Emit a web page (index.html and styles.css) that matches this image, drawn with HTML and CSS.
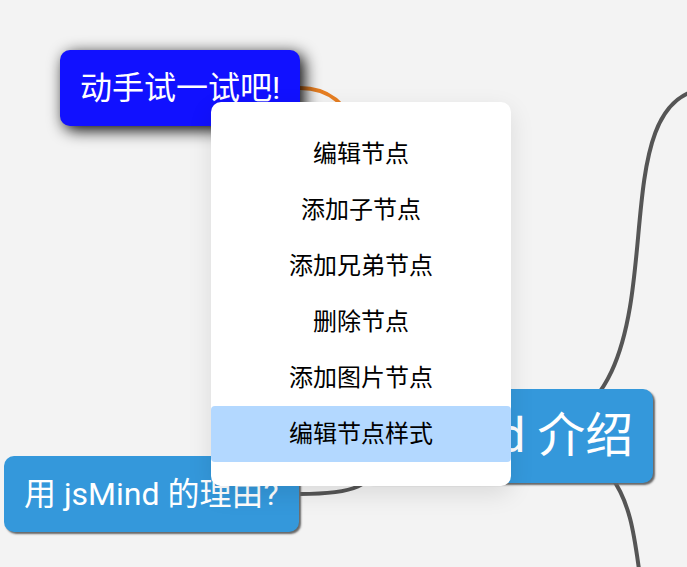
FILE: index.html
```html
<!DOCTYPE html>
<html lang="zh-CN">
<head>
<meta charset="utf-8">
<title>jsMind 介绍</title>
<link rel="stylesheet" href="styles.css">
</head>
<body>
<main class="mindmap">
  <svg class="lines" aria-hidden="true">
    <path class="line line-orange" d="M300 88C437 88 300 436 505 436"/>
    <path class="line" d="M300 494C437 494 300 436 505 436"/>
    <path class="line" d="M714 88C575 88 714 436 505 436"/>
    <path class="line" d="M714 658C575 658 714 436 505 436"/>
  </svg>
  <div class="node node-root">jsMind 介绍</div>
  <div class="node node-selected">动手试一试吧!</div>
  <div class="node node-reason">用 jsMind 的理由?</div>
  <div class="menu" role="menu">
    <button class="menu-item" type="button" role="menuitem">编辑节点</button>
    <button class="menu-item" type="button" role="menuitem">添加子节点</button>
    <button class="menu-item" type="button" role="menuitem">添加兄弟节点</button>
    <button class="menu-item" type="button" role="menuitem">删除节点</button>
    <button class="menu-item" type="button" role="menuitem">添加图片节点</button>
    <button class="menu-item menu-item-active" type="button" role="menuitem">编辑节点样式</button>
  </div>
</main>
</body>
</html>
```
FILE: styles.css
```css
* {
  box-sizing: border-box;
}

body {
  margin: 0;
  background: #f3f3f3;
  font-family: Roboto, "Noto Sans CJK SC", sans-serif;
}

.mindmap {
  position: relative;
  min-height: 100vh;
  overflow: hidden;
}

.lines {
  position: absolute;
  inset: 0;
  width: 100%;
  height: 100%;
}

.line {
  fill: none;
  stroke: #555;
  stroke-width: 4;
}

.line-orange {
  stroke: #e67e22;
}

.node {
  position: absolute;
  padding: 20px;
  border-radius: 10px;
  background: #3498db;
  box-shadow: 2px 2px 2px #666;
  color: #fff;
  font-size: 32px;
  line-height: 36px;
  white-space: nowrap;
}

.node-root {
  top: 389px;
  left: 362px;
  font-size: 48px;
  line-height: 54px;
}

.node-selected {
  top: 50px;
  left: 60px;
  background: #11f;
  box-shadow: 4px 4px 16px #000;
}

.node-reason {
  top: 456px;
  left: 4px;
}

.menu {
  position: absolute;
  top: 102px;
  left: 211px;
  display: flex;
  flex-direction: column;
  width: 300px;
  padding: 24px 0;
  border-radius: 10px;
  background: #fff;
  box-shadow: 0 8px 24px rgba(0, 0, 0, 0.1);
}

.menu-item {
  height: 56px;
  padding: 0 0 4px;
  border: 0;
  border-radius: 4px;
  background: transparent;
  color: #000;
  font-family: "Noto Sans CJK SC", sans-serif;
  font-size: 24px;
  line-height: 32px;
}

.menu-item-active {
  background: #b3d8ff;
}
```
